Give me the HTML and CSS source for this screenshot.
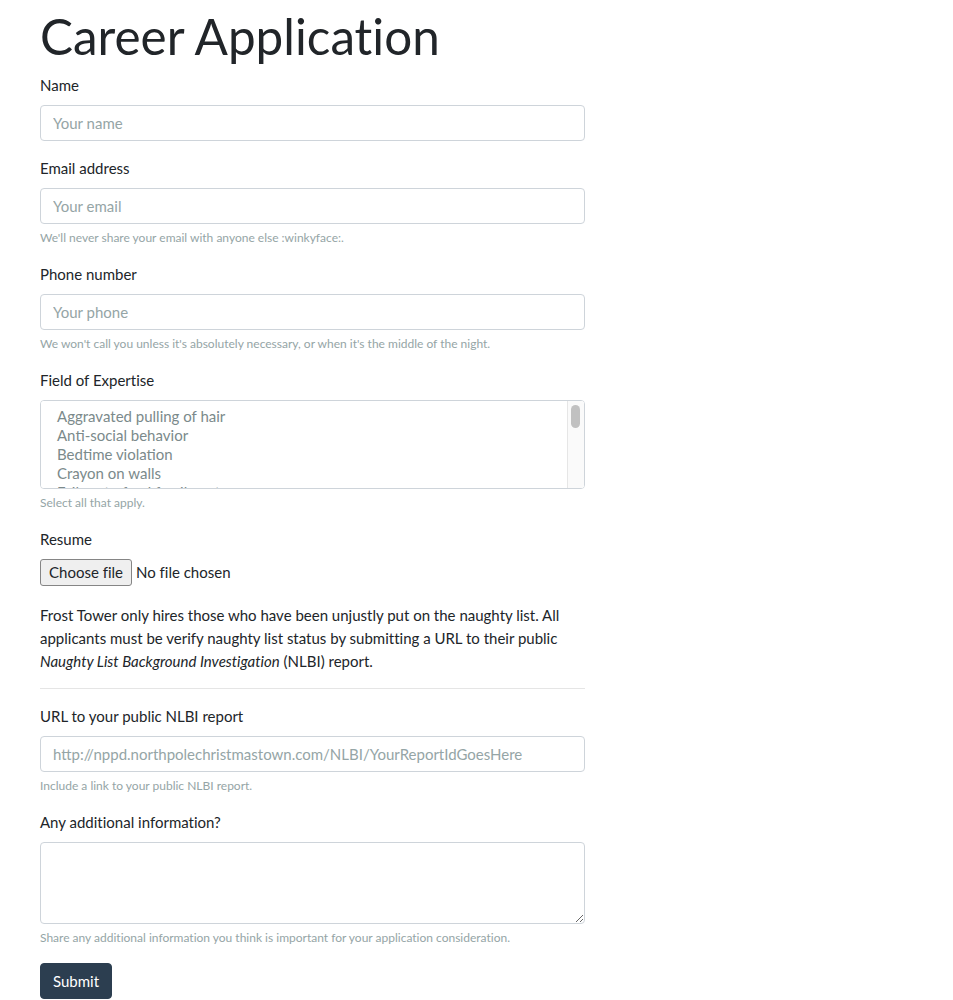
FILE: index.html
```html
<!DOCTYPE html>
<html lang="en">
<head>
<meta charset="utf-8">
<title>Career Application</title>
<link rel="stylesheet" href="styles.css">
</head>
<body>
<div class="container">
  <h1 class="title">Career Application</h1>
  <form class="form">
    <div class="form-group">
      <label for="name">Name</label>
      <input id="name" class="form-control" type="text" placeholder="Your name">
    </div>
    <div class="form-group">
      <label for="email">Email address</label>
      <input id="email" class="form-control" type="email" placeholder="Your email">
      <small class="form-text">We'll never share your email with anyone else :winkyface:.</small>
    </div>
    <div class="form-group">
      <label for="phone">Phone number</label>
      <input id="phone" class="form-control" type="text" placeholder="Your phone">
      <small class="form-text">We won't call you unless it's absolutely necessary, or when it's the middle of the night.</small>
    </div>
    <div class="form-group">
      <label for="field">Field of Expertise</label>
      <div class="select-wrap">
        <select id="field" class="form-control select-multi" multiple>
          <option>Aggravated pulling of hair</option>
          <option>Anti-social behavior</option>
          <option>Bedtime violation</option>
          <option>Crayon on walls</option>
          <option>Failure to feed family pet</option>
          <option>Gum under the desk</option>
          <option>Hiding vegetables</option>
          <option>Ignoring parents</option>
          <option>Jumping on the bed</option>
          <option>Kicking the seat</option>
          <option>Lying about homework</option>
          <option>Making a mess</option>
          <option>Not sharing toys</option>
          <option>Pulling pranks</option>
          <option>Running in the hallway</option>
          <option>Sneaking cookies</option>
          <option>Talking back</option>
          <option>Whining</option>
        </select>
        <div class="fake-scrollbar" aria-hidden="true"><div class="fake-thumb"></div></div>
      </div>
      <small class="form-text">Select all that apply.</small>
    </div>
    <div class="form-group">
      <label for="resume">Resume</label>
      <div class="file-row">
        <label class="file-btn" for="resume">Choose file</label>
        <span class="file-name">No file chosen</span>
        <input id="resume" class="file-hidden" type="file">
      </div>
    </div>
    <p class="intro">Frost Tower only hires those who have been unjustly put on the naughty list. All applicants must be verify naughty list status by submitting a URL to their public <em>Naughty List Background Investigation</em> (NLBI) report.</p>
    <hr class="divider">
    <div class="form-group">
      <label for="url">URL to your public NLBI report</label>
      <input id="url" class="form-control" type="text" placeholder="http://nppd.northpolechristmastown.com/NLBI/YourReportIdGoesHere">
      <small class="form-text">Include a link to your public NLBI report.</small>
    </div>
    <div class="form-group">
      <label for="info">Any additional information?</label>
      <textarea id="info" class="form-control textarea" rows="3"></textarea>
      <small class="form-text">Share any additional information you think is important for your application consideration.</small>
    </div>
    <button type="button" class="btn-primary">Submit</button>
  </form>
</div>
</body>
</html>
```
FILE: styles.css
```css
* { box-sizing: border-box; }
html, body { margin: 0; padding: 0; background: #fff; }
body {
  font-family: Lato, "Noto Sans", sans-serif;
  font-size: 15px;
  line-height: 23px;
  color: #212529;
  font-variant-ligatures: none;
}
.container {
  padding: 0 40px;
  width: 625px;
}
.title {
  font-family: Lato, sans-serif;
  font-weight: 400;
  font-size: 49.4px;
  line-height: 1.2;
  margin: 7px 0 8px;
  color: #212529;
}
.form { margin: 0; }
.form-group { margin-bottom: 16px; }
label {
  display: inline-block;
  margin-bottom: 8px;
  line-height: 23px;
}
.form-control {
  display: block;
  width: 100%;
  height: 36px;
  padding: 6px 12px;
  font-family: Lato, sans-serif;
  font-size: 15px;
  line-height: 22px;
  color: #7b8a8b;
  background: #fff;
  border: 1px solid #ced4da;
  border-radius: 4px;
  outline: none;
}
.form-control::placeholder { color: #95a5a6; opacity: 1; }
.select-wrap { position: relative; }
.select-multi {
  height: 89px;
  padding: 6px 0 0 12px;
  font-size: 15px;
  overflow-y: scroll;
}
.select-multi option {
  padding: 0 4px;
  line-height: 19px;
  min-height: 19px;
  color: #7b8a8b;
}
.fake-scrollbar {
  position: absolute;
  top: 1px;
  right: 1px;
  bottom: 1px;
  width: 17px;
  background: #fafafa;
  border-left: 1px solid #e6e6e6;
  border-radius: 0 3px 3px 0;
}
.fake-thumb {
  position: absolute;
  top: 4px;
  left: 3px;
  width: 9px;
  height: 23px;
  border-radius: 5px;
  background: #c1c1c1;
}
.textarea {
  height: 82px;
  resize: vertical;
}
.form-text {
  display: block;
  margin-top: 4px;
  font-size: 12px;
  line-height: 19px;
  color: #95a5a6;
}
.file-row {
  display: flex;
  align-items: center;
  gap: 4px;
  height: 27px;
}
.file-btn {
  margin: 0;
  height: 27px;
  padding: 0 8px;
  display: flex;
  align-items: center;
  font-size: 15px;
  color: #212529;
  background: #efefef;
  border: 1px solid #858585;
  border-radius: 3px;
  cursor: pointer;
}
.file-name { font-size: 15px; color: #212529; }
.file-hidden { display: none; }
.intro { margin: 18px 0 15px; }
em { font-style: italic; }
.divider {
  margin: 15px 0 16px;
  border: 0;
  border-top: 1px solid rgba(0,0,0,0.1);
  height: 0;
}
.btn-primary {
  display: inline-block;
  font-family: Lato, sans-serif;
  font-size: 15px;
  line-height: 22px;
  height: 36px;
  padding: 6px 12px;
  color: #fff;
  background: #2c3e50;
  border: 1px solid #2c3e50;
  border-radius: 4px;
  cursor: pointer;
}
```
